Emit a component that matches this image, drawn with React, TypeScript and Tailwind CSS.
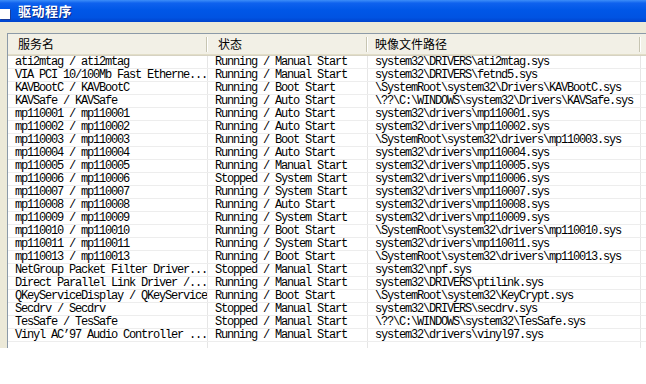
const rows: [string, string, string][] = [
  ["ati2mtag / ati2mtag", "Running / Manual Start", "system32\\DRIVERS\\ati2mtag.sys"],
  ["VIA PCI 10/100Mb Fast Etherne...", "Running / Manual Start", "system32\\DRIVERS\\fetnd5.sys"],
  ["KAVBootC / KAVBootC", "Running / Boot Start", "\\SystemRoot\\system32\\Drivers\\KAVBootC.sys"],
  ["KAVSafe / KAVSafe", "Running / Auto Start", "\\??\\C:\\WINDOWS\\system32\\Drivers\\KAVSafe.sys"],
  ["mp110001 / mp110001", "Running / Auto Start", "system32\\drivers\\mp110001.sys"],
  ["mp110002 / mp110002", "Running / Auto Start", "system32\\drivers\\mp110002.sys"],
  ["mp110003 / mp110003", "Running / Boot Start", "\\SystemRoot\\system32\\drivers\\mp110003.sys"],
  ["mp110004 / mp110004", "Running / Auto Start", "system32\\drivers\\mp110004.sys"],
  ["mp110005 / mp110005", "Running / Manual Start", "system32\\drivers\\mp110005.sys"],
  ["mp110006 / mp110006", "Stopped / System Start", "system32\\drivers\\mp110006.sys"],
  ["mp110007 / mp110007", "Running / System Start", "system32\\drivers\\mp110007.sys"],
  ["mp110008 / mp110008", "Running / Auto Start", "system32\\drivers\\mp110008.sys"],
  ["mp110009 / mp110009", "Running / System Start", "system32\\drivers\\mp110009.sys"],
  ["mp110010 / mp110010", "Running / Boot Start", "\\SystemRoot\\system32\\drivers\\mp110010.sys"],
  ["mp110011 / mp110011", "Running / System Start", "system32\\drivers\\mp110011.sys"],
  ["mp110013 / mp110013", "Running / Boot Start", "\\SystemRoot\\system32\\drivers\\mp110013.sys"],
  ["NetGroup Packet Filter Driver...", "Stopped / Manual Start", "system32\\npf.sys"],
  ["Direct Parallel Link Driver /...", "Running / Manual Start", "system32\\DRIVERS\\ptilink.sys"],
  ["QKeyServiceDisplay / QKeyService", "Running / Boot Start", "\\SystemRoot\\system32\\KeyCrypt.sys"],
  ["Secdrv / Secdrv", "Stopped / Manual Start", "system32\\DRIVERS\\secdrv.sys"],
  ["TesSafe / TesSafe", "Stopped / Manual Start", "\\??\\C:\\WINDOWS\\system32\\TesSafe.sys"],
  ["Vinyl AC’97 Audio Controller ...", "Running / Manual Start", "system32\\drivers\\vinyl97.sys"],
];

function HeaderCell({ label, width, pad }: { label: string; width: string; pad: string }) {
  return (
    <div className={`${width} shrink-0 flex items-center justify-between`}>
      <span className={`${pad} whitespace-nowrap`}>{label}</span>
      {/* column splitter */}
      <div className="flex h-[15px]">
        <div className="w-px bg-[#c7c5b2]" />
        <div className="w-px bg-white" />
      </div>
    </div>
  );
}

export default function App() {
  return (
    <div className="w-[646px] h-[384px] bg-white overflow-hidden flex flex-col">
      {/* title bar */}
      <div className="h-[22px] shrink-0 flex bg-[linear-gradient(to_bottom,#3d8ef8_0%,#0f62ee_14%,#0057e7_45%,#0053e2_80%,#0043cc_100%)]">
        <div className="w-[10px] h-[10px] mt-[9px] bg-white shadow-[1px_1px_0_#1a3c9a]" />
        <span className="ml-[8px] leading-[21px] text-white font-bold text-[13px] tracking-[0.5px] font-['Noto_Sans_CJK_SC',sans-serif] [text-shadow:1px_1px_0_#0a2a8a]">
          驱动程序
        </span>
      </div>

      {/* dialog body */}
      <div className="h-[326px] shrink-0 flex bg-[#ece9d8] pl-[7px] pt-[11px]">
        <div className="flex-1 flex flex-col bg-white border-l border-t border-[#8c9aa8]">
          {/* list header */}
          <div className="h-[22px] shrink-0 flex pb-[2px] bg-[#f2f0e6] shadow-[inset_0_-1px_0_#d6d2c2,inset_0_-2px_0_#e2dec8] text-[12px] text-black font-['Noto_Sans_CJK_SC',sans-serif]">
            <HeaderCell label="服务名" width="w-[200px]" pad="pl-[10px]" />
            <HeaderCell label="状态" width="w-[160px]" pad="pl-[10px]" />
            <HeaderCell label="映像文件路径" width="w-[273px]" pad="pl-[7px]" />
          </div>

          {/* rows */}
          <div className="flex flex-col text-[12px] leading-[12px] text-black tracking-[-1.2px] font-['Liberation_Mono',monospace]">
            {rows.map(([name, state, path]) => (
              <div key={name} className="h-[13px] flex border-b border-[#ededed]">
                <div className="w-[200px] shrink-0 pl-[7px] border-r border-[#e6e6e6] whitespace-nowrap overflow-hidden">
                  {name}
                </div>
                <div className="w-[160px] shrink-0 pl-[7px] border-r border-[#e6e6e6] whitespace-nowrap overflow-hidden">
                  {state}
                </div>
                <div className="w-[273px] shrink-0 pl-[7px] border-r border-[#e6e6e6] whitespace-nowrap overflow-hidden">
                  {path}
                </div>
              </div>
            ))}
          </div>

          {/* empty space under the last row */}
          <div className="flex-1 flex">
            <div className="w-[200px] shrink-0 border-r border-[#e6e6e6]" />
            <div className="w-[160px] shrink-0 border-r border-[#e6e6e6]" />
            <div className="w-[273px] shrink-0 border-r border-[#e6e6e6]" />
          </div>
        </div>
      </div>

      <div className="flex-1 bg-white" />
    </div>
  );
}
